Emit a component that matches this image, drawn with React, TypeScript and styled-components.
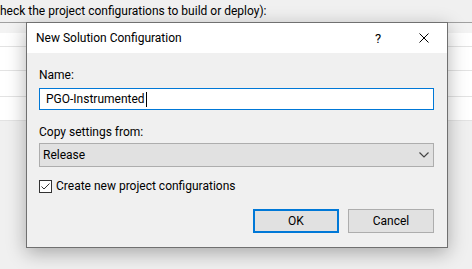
import React from 'react';
import styled, { createGlobalStyle } from 'styled-components';

const GlobalStyle = createGlobalStyle`
	html, body {
		margin: 0;
		padding: 0;
		background: #f0f0f0;
	}
	body {
		font-family: "Segoe UI", Roboto, "Noto Sans", sans-serif;
		font-size: 12px;
		color: #000;
	}
`

const Screen = styled.div`
	position: relative;
	width: 472px;
	height: 269px;
	overflow: hidden;
	background: #f0f0f0;
`

const Hint = styled.div`
	height: 22px;
	line-height: 22px;
	white-space: nowrap;
	padding-left: 0;
`

const Grid = styled.div`
	border-top: 1px solid #a0a0a0;
	background: #fff;
`

const GridRow = styled.div<{ header?: boolean; h: number }>`
	height: ${(p) => p.h}px;
	border-bottom: 1px solid #e3e3e3;
	background: ${(p) => (p.header ? 'linear-gradient(#f3f3f3 0, #f3f3f3 10px, #fff 10px)' : '#fff')};
`

const Dialog = styled.div`
	position: absolute;
	left: 26px;
	top: 22px;
	width: 420px;
	height: 224px;
	border: 1px solid #707070;
	background: #f0f0f0;
	box-shadow: 0 5px 18px rgba(0, 0, 0, 0.3);
	display: flex;
	flex-direction: column;
`

const TitleBar = styled.div`
	height: 30px;
	background: #fff;
	display: flex;
	align-items: center;
	padding-left: 9px;
`

const Title = styled.div`
	flex: 1;
`

const CaptionButton = styled.div`
	width: 46px;
	height: 30px;
	display: flex;
	align-items: center;
	justify-content: center;
	font-size: 13px;
`

const Body = styled.div`
	flex: 1;
	display: flex;
	flex-direction: column;
	padding: 14px 13px 0 12px;
`

const Label = styled.div<{ gap: number }>`
	line-height: 16px;
	margin-bottom: ${(p) => p.gap}px;
`

const TextBox = styled.div`
	height: 20px;
	border: 1px solid #0078d7;
	background: #fff;
	display: flex;
	align-items: center;
	padding-left: 6px;
	margin-bottom: 14px;
`

const Caret = styled.span`
	display: inline-block;
	width: 1px;
	height: 15px;
	background: #000;
	margin-left: 1px;
`

const Combo = styled.div`
	height: 22px;
	border: 1px solid #adadad;
	background: #e1e1e1;
	display: flex;
	align-items: center;
	justify-content: space-between;
	padding: 0 4px 0 3px;
	margin-bottom: 11px;
`

const CheckRow = styled.div`
	display: flex;
	align-items: center;
	height: 16px;
	gap: 4px;
	margin-bottom: 15px;
`

const ButtonRow = styled.div`
	display: flex;
	justify-content: flex-end;
	gap: 9px;
`

const Button = styled.div<{ primary?: boolean }>`
	box-sizing: border-box;
	width: 86px;
	height: 24px;
	border: ${(p) => (p.primary ? '2px solid #0078d7' : '1px solid #adadad')};
	background: #e1e1e1;
	display: flex;
	align-items: center;
	justify-content: center;
`

const App = () => {
	return <Screen>
		<GlobalStyle />
		<Hint>heck the project configurations to build or deploy):</Hint>
		<Grid>
			<GridRow header h={23} />
			<GridRow h={23} />
			<GridRow h={25} />
			<GridRow h={23} />
		</Grid>
		<Dialog>
			<TitleBar>
				<Title>New Solution Configuration</Title>
				<CaptionButton>?</CaptionButton>
				<CaptionButton>
					<svg width="10" height="10" viewBox="0 0 10 10">
						<path d="M0.5 0.5 L9.5 9.5 M9.5 0.5 L0.5 9.5" stroke="#000" strokeWidth="1" />
					</svg>
				</CaptionButton>
			</TitleBar>
			<Body>
				<Label gap={5}>Name:</Label>
				<TextBox>PGO-Instrumented<Caret /></TextBox>
				<Label gap={3}>Copy settings from:</Label>
				<Combo>
					<span>Release</span>
					<svg width="10" height="6" viewBox="0 0 10 6">
						<path d="M0.5 0.5 L5 5 L9.5 0.5" stroke="#444" strokeWidth="1.2" fill="none" />
					</svg>
				</Combo>
				<CheckRow>
					<svg width="13" height="13" viewBox="0 0 13 13">
						<rect x="0.5" y="0.5" width="12" height="12" fill="#fff" stroke="#333" />
						<path d="M2.5 6.5 L5 9 L10.5 3.5" stroke="#333" strokeWidth="1" fill="none" />
					</svg>
					<span>Create new project configurations</span>
				</CheckRow>
				<ButtonRow>
					<Button primary>OK</Button>
					<Button>Cancel</Button>
				</ButtonRow>
			</Body>
		</Dialog>
	</Screen>;
};

export default App;
